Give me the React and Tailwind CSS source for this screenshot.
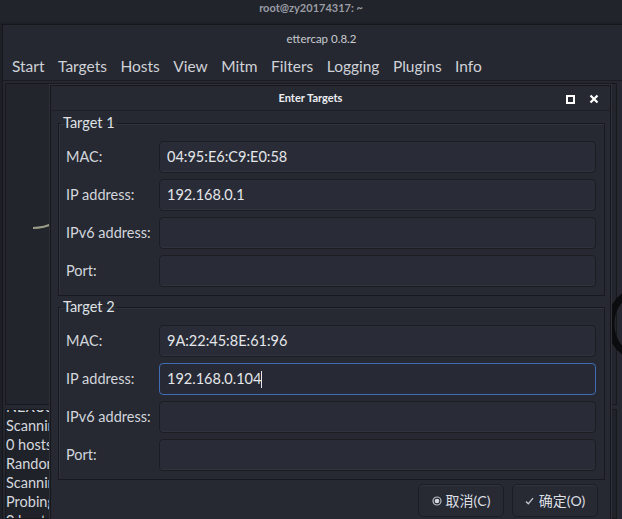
import React from "react";

const menus = ["Start", "Targets", "Hosts", "View", "Mitm", "Filters", "Logging", "Plugins", "Info"];

const logLines = ["Scanning for merged targets", "0 hosts added to the hosts list", "Randomizing 255 hosts", "Scanning the whole netmask", "Probing 255 hosts", "0 hosts added"];

function Field({ label, value, focused }) {
  return (
    <div className="flex items-center h-[32px]">
      <div className="w-[96px] shrink-0 pl-[3px] text-[14.5px] whitespace-nowrap text-[#d3d6dc]">{label}</div>
      <div
        className={`flex-1 h-full flex items-center px-[7px] rounded-[4px] text-[14.5px] text-[#e4e6ea] ${
          focused
            ? "border border-[#3f6db5] bg-[#272a35]"
            : "border border-[#1b1d23] bg-[#292c37] shadow-[inset_0_-1px_0_#30333e]"
        }`}
      >
        {value}
        {focused && <span className="w-px h-[17px] bg-[#e4e6ea]" />}
      </div>
    </div>
  );
}

function TargetFrame({ title, mac, ip, focused }) {
  return (
    <fieldset className="border border-[#17191e] shadow-[inset_1px_1px_0_#30333d] mr-[5px] pl-[4px] pr-[8px] pb-[8px] pt-[10px]">
      <legend className="px-[2px] ml-[-2px] text-[14.5px] text-[#dfe1e5] leading-[16px]">{title}</legend>
      <div className="flex flex-col gap-[6px]">
        <Field label="MAC:" value={mac} />
        <Field label="IP address:" value={ip} focused={focused} />
        <Field label="IPv6 address:" value="" />
        <Field label="Port:" value="" />
      </div>
    </fieldset>
  );
}

export default function App() {
  return (
    <div
      className="relative w-[622px] h-[519px] overflow-hidden bg-[#1e2027] select-none"
      style={{ fontFamily: 'Lato, "Noto Sans CJK SC", sans-serif' }}
    >
      {/* terminal title */}
      <div className="h-[22px] shrink-0 flex justify-center pt-[1px] bg-[#21242b] text-[11px] leading-[14px] font-bold text-[#9a9da5]">
        root@zy20174317: ~
      </div>

      {/* ettercap window */}
      <div className="ml-[2px] mt-[2px] h-[495px] flex flex-col bg-[#252830] border-l border-t border-[#15171b]">
        <div className="h-[28px] shrink-0 flex items-center justify-center pl-[18px] text-[11.5px] text-[#c9ccd2]">
          ettercap 0.8.2
        </div>
        <div className="h-[27px] shrink-0 flex items-center pl-[9px] gap-[13.5px] text-[15.5px] text-[#cfd2d8]">
          {menus.map((m) => (
            <span key={m}>{m}</span>
          ))}
        </div>
        <div className="h-px shrink-0 bg-[#1a1c21]" />
        <div className="flex-1 min-h-0 flex flex-col pl-[2px] pr-[5px] pt-[2px]">
          <div className="h-[322px] shrink-0 border border-[#17191d] bg-[#22252c] relative">
            <svg className="absolute left-[26px] top-[138px]" width="24" height="12" viewBox="0 0 24 12">
              <path d="M1 6 C8 6 14 5 22 1" stroke="#9a9c88" strokeWidth="2" fill="none" />
            </svg>
            <svg className="absolute right-[-19px] top-[205px]" width="30" height="70" viewBox="0 0 30 70">
              <path d="M28 3 C12 8 6 22 6 35 C6 48 12 62 28 67" stroke="#0b0c0e" strokeWidth="7" fill="none" />
            </svg>
          </div>
          <div className="flex-1 min-h-0 mt-[4px] bg-[#20222a] border border-[#17191d] overflow-hidden text-[14.5px] leading-[19px] text-[#d5d8dd]">
            <div className="mt-[-13px] whitespace-nowrap">NEXUS-2 plugin loaded</div>
            {logLines.map((l, i) => (
              <div key={i} className="whitespace-nowrap">{l}</div>
            ))}
          </div>
        </div>
      </div>

      {/* dialog */}
      <div className="absolute left-[50px] top-[85px] w-[561px] h-[440px] bg-[#262932] border border-[#15171b] shadow-[0_0_0_1px_#2e313a] flex flex-col">
        <div className="h-[25px] relative flex items-center justify-center pr-[40px] border-b border-[#1d1f25]">
          <span className="text-[11px] font-bold text-[#eceef1]">Enter Targets</span>
          <div className="absolute right-[11px] top-[8px] flex items-center gap-[14px]">
            <span className="block w-[9px] h-[9px] border-[2px] border-white" />
            <svg width="10" height="10" viewBox="0 0 10 10">
              <path d="M1.5 1.5 L8.5 8.5 M8.5 1.5 L1.5 8.5" stroke="white" strokeWidth="2.2" />
            </svg>
          </div>
        </div>
        <div className="pl-[7px] pt-[4px] flex flex-col gap-[3px]">
          <TargetFrame title="Target 1" mac="04:95:E6:C9:E0:58" ip="192.168.0.1" />
          <TargetFrame title="Target 2" mac="9A:22:45:8E:61:96" ip="192.168.0.104" focused />
        </div>
        <div className="flex justify-end gap-[8px] pr-[12px] pt-[4px]">
          <button className="w-[86px] h-[33px] flex items-center justify-center gap-[4px] rounded-[5px] border border-[#1b1d23] bg-[#272a33] shadow-[inset_0_1px_0_#30333d] text-[14px] text-[#dcdfe3]">
            <svg width="10" height="10" viewBox="0 0 10 10">
              <circle cx="5" cy="5" r="4" fill="none" stroke="#b9bcc2" strokeWidth="1.2" />
              <circle cx="5" cy="5" r="2.3" fill="#d5d8dd" />
            </svg>
            <span>取消(C)</span>
          </button>
          <button className="w-[86px] h-[33px] flex items-center justify-center gap-[5px] rounded-[5px] border border-[#1b1d23] bg-[#272a33] shadow-[inset_0_1px_0_#30333d] text-[14px] text-[#dcdfe3]">
            <svg width="9" height="8" viewBox="0 0 9 8">
              <path d="M1 4.5 L3.3 6.8 L8 1.2" stroke="#c9ccd2" strokeWidth="1.3" fill="none" />
            </svg>
            <span>确定(O)</span>
          </button>
        </div>
      </div>
    </div>
  );
}
